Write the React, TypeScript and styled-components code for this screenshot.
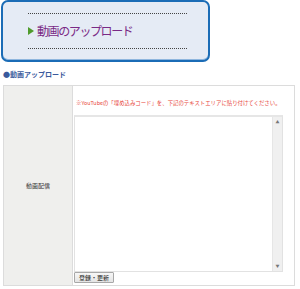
import React from 'react'
import styled, { createGlobalStyle } from 'styled-components'

const GlobalStyle = createGlobalStyle`
  html, body {
    margin: 0;
    padding: 0;
    background: #ffffff;
    width: 300px;
    height: 289px;
    overflow: hidden;
  }
  body {
    font-family: "Noto Sans CJK JP", "Noto Sans", sans-serif;
  }
`

const Page = styled.div`
  display: flex;
  flex-direction: column;
  padding: 0 0 0 1px;
`

const TitleBox = styled.div`
  box-sizing: border-box;
  width: 209px;
  height: 62px;
  background: #e5ebf5;
  border: 2px solid #1b6cb6;
  border-radius: 7px;
  box-shadow: inset 0 -1px 0 #8fb6de;
  padding: 11px 0 0 25px;
`

const Dotted = styled.div`
  width: 159px;
  border-top: 1px dotted #444;
`

const TitleRow = styled.div`
  display: flex;
  align-items: center;
  height: 34px;
  gap: 3px;
`

const Arrow = styled.span`
  width: 0;
  height: 0;
  border-left: 6px solid #4f9b2c;
  border-top: 4px solid transparent;
  border-bottom: 4px solid transparent;
`

const Title = styled.h1`
  margin: 0;
  font-size: 12px;
  font-weight: normal;
  letter-spacing: -1.4px;
  color: #7a2a86;
  line-height: 1;
`

const Heading = styled.h2`
  margin: 7px 0 0 2px;
  font-size: 7px;
  font-weight: bold;
  color: #3a5a9c;
  line-height: 10px;
  height: 10px;
`

const Table = styled.div`
  box-sizing: border-box;
  margin: 6px 0 0 2px;
  width: 292px;
  height: 201px;
  display: grid;
  grid-template-columns: 69px 1fr;
  border: 1px solid #dcdcdc;
`

const LabelCell = styled.div`
  background: #efefed;
  border-right: 1px solid #dcdcdc;
  display: flex;
  align-items: center;
  justify-content: center;
  font-size: 6px;
  color: #333;
`

const ValueCell = styled.div`
  padding: 13px 0 0 1px;
  display: flex;
  flex-direction: column;
  align-items: flex-start;
`

const Note = styled.p`
  margin: 0 0 0 2px;
  font-size: 5.4px;
  line-height: 8px;
  color: #e8473c;
  white-space: nowrap;
`

const AreaWrap = styled.div`
  box-sizing: border-box;
  margin-top: 8px;
  width: 209px;
  height: 157px;
  display: flex;
  border: 1px solid #e2e2e2;
  border-top: 2px solid #e6e6e6;
  background: #fff;
`

const Area = styled.textarea`
  flex: 1;
  border: none;
  outline: none;
  resize: none;
  padding: 2px;
  font-size: 6px;
  background: transparent;
`

const Scrollbar = styled.div`
  width: 9px;
  background: #f0f0f0;
  border-left: 1px solid #e6e6e6;
  display: flex;
  flex-direction: column;
  justify-content: space-between;
  align-items: center;
  padding: 3px 0;
  font-size: 4px;
  line-height: 4px;
  color: #777;
`

const Button = styled.button`
  box-sizing: border-box;
  display: block;
  width: 40px;
  height: 11px;
  padding: 0;
  font-family: inherit;
  font-size: 6px;
  line-height: 9px;
  color: #222;
  background: linear-gradient(#f7f7f7, #e4e4e4);
  border: 1px solid #a8a8a8;
  border-radius: 1px;
`

export default function App() {
  return (
    <Page>
      <GlobalStyle />
      <TitleBox>
        <Dotted />
        <TitleRow>
          <Arrow />
          <Title>動画のアップロード</Title>
        </TitleRow>
        <Dotted />
      </TitleBox>
      <Heading>●動画アップロード</Heading>
      <Table>
        <LabelCell>動画配信</LabelCell>
        <ValueCell>
          <Note>※YouTubeの「埋め込みコード」を、下記のテキストエリアに貼り付けてください。</Note>
          <AreaWrap>
            <Area />
            <Scrollbar>
              <span>▲</span>
              <span>▼</span>
            </Scrollbar>
          </AreaWrap>
          <Button>登録・更新</Button>
        </ValueCell>
      </Table>
    </Page>
  )
}
